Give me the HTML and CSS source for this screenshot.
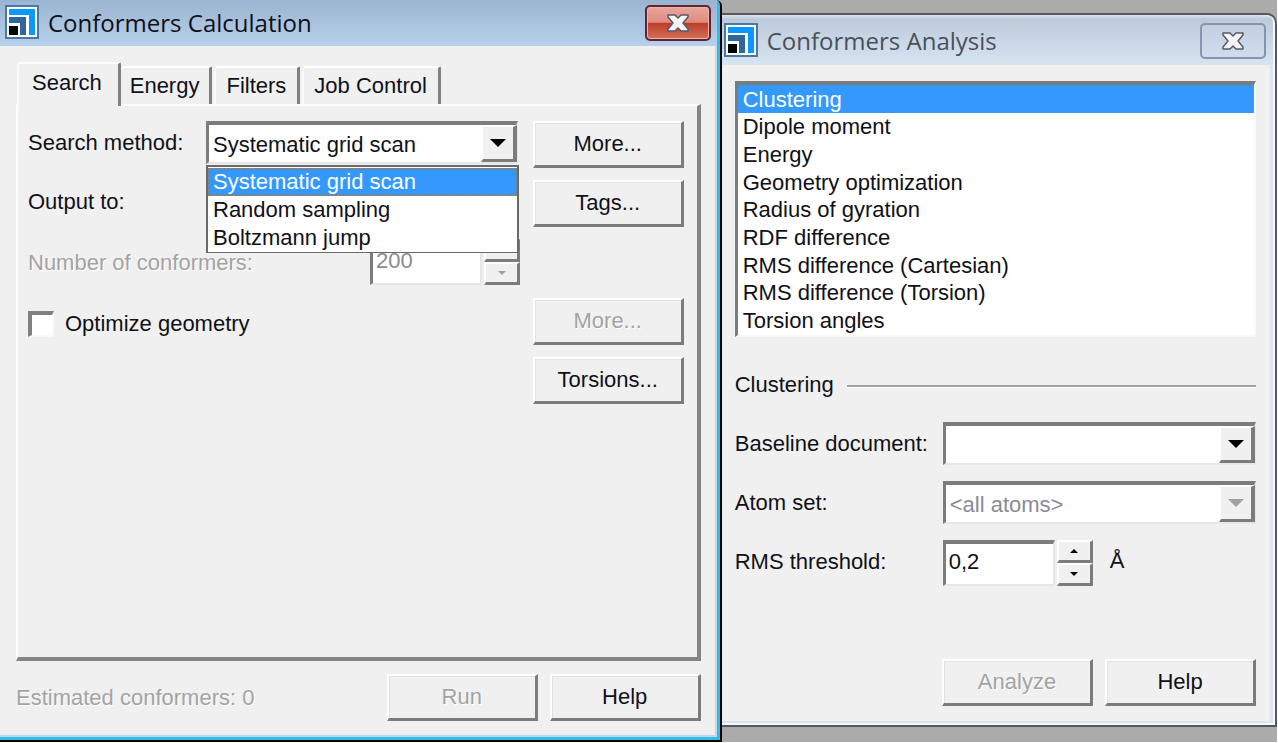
FILE: index.html
```html
<!DOCTYPE html>
<html lang="en">
<head>
<meta charset="utf-8">
<title>Conformers</title>
<link rel="stylesheet" href="styles.css">
</head>
<body>
<main class="desktop">
  <section class="window window-active" aria-labelledby="calc-title">
    <header class="titlebar">
      <svg class="app-icon" viewBox="0 0 34 34" aria-hidden="true">
        <rect width="34" height="34" fill="#4a79a8"/>
        <rect x="2" y="2" width="30" height="30" fill="#fff"/>
        <path d="M4 4h26v26h-6V10H4z" fill="#0a98ff"/>
        <path d="M4 12h17v18h-6V18H4z" fill="#2f679c"/>
        <rect x="4" y="21" width="9" height="9" fill="#000"/>
      </svg>
      <h1 class="title" id="calc-title">Conformers Calculation</h1>
      <button class="close close-red" type="button" aria-label="Close">
        <svg viewBox="0 0 22 18" aria-hidden="true"><path d="M1 1h7l3 3 3-3h7v2l-5 6 5 6v2h-7l-3-3-3 3H1v-2l5-6-5-6z" fill="#f4f4f4" stroke="#565a68" stroke-width="1.500" stroke-linejoin="round"/></svg>
      </button>
    </header>
    <div class="client">
      <div class="tabs" role="tablist">
        <button class="tab tab-active" type="button" role="tab" aria-selected="true">Search</button>
        <button class="tab tab-energy" type="button" role="tab" aria-selected="false">Energy</button>
        <button class="tab" type="button" role="tab" aria-selected="false">Filters</button>
        <button class="tab" type="button" role="tab" aria-selected="false">Job Control</button>
      </div>
      <div class="panel" role="tabpanel">
        <div class="row">
          <label class="label" for="method">Search method:</label>
          <div class="combo">
            <select class="field" id="method">
              <option>Systematic grid scan</option>
              <option>Random sampling</option>
              <option>Boltzmann jump</option>
            </select>
            <span class="drop" aria-hidden="true"><svg viewBox="0 0 16 8"><path d="M0 0h16L8 8z"/></svg></span>
            <ul class="menu">
              <li class="menu-item menu-selected">Systematic grid scan</li>
              <li class="menu-item">Random sampling</li>
              <li class="menu-item">Boltzmann jump</li>
            </ul>
          </div>
          <button class="button" type="button">More...</button>
        </div>
        <div class="row">
          <span class="label">Output to:</span>
          <button class="button" type="button">Tags...</button>
        </div>
        <div class="row">
          <label class="label label-wide disabled" for="count">Number of conformers:</label>
          <div class="spin">
            <input class="field number" id="count" type="text" value="200" disabled>
            <span class="steps">
              <button class="step" type="button" aria-label="Increase" disabled><svg viewBox="0 0 8 4"><path d="M0 4h8L4 0z"/></svg></button>
              <button class="step" type="button" aria-label="Decrease" disabled><svg viewBox="0 0 8 4"><path d="M0 0h8L4 4z"/></svg></button>
            </span>
          </div>
        </div>
        <div class="row">
          <label class="check"><input class="box" type="checkbox">Optimize geometry</label>
          <button class="button" type="button" disabled>More...</button>
        </div>
        <div class="row">
          <button class="button" type="button">Torsions...</button>
        </div>
      </div>
      <footer class="footer">
        <span class="status disabled">Estimated conformers: 0</span>
        <button class="button" type="button" disabled>Run</button>
        <button class="button" type="button">Help</button>
      </footer>
    </div>
  </section>

  <section class="window window-back" aria-labelledby="analysis-title">
    <header class="titlebar">
      <svg class="app-icon" viewBox="0 0 34 34" aria-hidden="true">
        <rect width="34" height="34" fill="#4a79a8"/>
        <rect x="2" y="2" width="30" height="30" fill="#fff"/>
        <path d="M4 4h26v26h-6V10H4z" fill="#0a98ff"/>
        <path d="M4 12h17v18h-6V18H4z" fill="#2f679c"/>
        <rect x="4" y="21" width="9" height="9" fill="#000"/>
      </svg>
      <h1 class="title" id="analysis-title">Conformers Analysis</h1>
      <button class="close" type="button" aria-label="Close">
        <svg viewBox="0 0 22 18" aria-hidden="true"><path d="M1 1h7l3 3 3-3h7v2l-5 6 5 6v2h-7l-3-3-3 3H1v-2l5-6-5-6z" fill="#f4f4f4" stroke="#565a68" stroke-width="1.500" stroke-linejoin="round"/></svg>
      </button>
    </header>
    <div class="client">
      <ul class="listbox" role="listbox" aria-label="Analysis">
        <li class="option option-selected" role="option" aria-selected="true">Clustering</li>
        <li class="option" role="option">Dipole moment</li>
        <li class="option" role="option">Energy</li>
        <li class="option" role="option">Geometry optimization</li>
        <li class="option" role="option">Radius of gyration</li>
        <li class="option" role="option">RDF difference</li>
        <li class="option" role="option">RMS difference (Cartesian)</li>
        <li class="option" role="option">RMS difference (Torsion)</li>
        <li class="option" role="option">Torsion angles</li>
      </ul>
      <h2 class="group">Clustering</h2>
      <div class="form">
        <div class="row">
          <label class="label" for="baseline">Baseline document:</label>
          <div class="combo">
            <select class="field" id="baseline"><option></option></select>
            <span class="drop" aria-hidden="true"><svg viewBox="0 0 16 8"><path d="M0 0h16L8 8z"/></svg></span>
          </div>
        </div>
        <div class="row">
          <label class="label" for="atoms">Atom set:</label>
          <div class="combo">
            <select class="field" id="atoms" disabled><option>&lt;all atoms&gt;</option></select>
            <span class="drop drop-off" aria-hidden="true"><svg viewBox="0 0 16 8"><path d="M0 0h16L8 8z"/></svg></span>
          </div>
        </div>
        <div class="row">
          <label class="label" for="rms">RMS threshold:</label>
          <div class="spin">
            <input class="field number" id="rms" type="text" value="0,2">
            <span class="steps">
              <button class="step" type="button" aria-label="Increase"><svg viewBox="0 0 8 4"><path d="M0 4h8L4 0z"/></svg></button>
              <button class="step" type="button" aria-label="Decrease"><svg viewBox="0 0 8 4"><path d="M0 0h8L4 4z"/></svg></button>
            </span>
            <span class="unit">Å</span>
          </div>
        </div>
      </div>
      <footer class="footer">
        <button class="button" type="button" disabled>Analyze</button>
        <button class="button" type="button">Help</button>
      </footer>
    </div>
  </section>
</main>
</body>
</html>
```
FILE: styles.css
```css
* { box-sizing: border-box; }
body {
  margin: 0;
  background: #fff;
  color: #101018;
  font: 22px/28px "Liberation Sans", Arial, sans-serif;
}
button, input, select { font: inherit; color: inherit; margin: 0; }
ul { list-style: none; margin: 0; padding: 0; }

.desktop {
  display: flex;
  min-height: 100vh;
  background: #ababab;
  border: solid #fff;
  border-width: 0 1px 1px 0;
}

/* Windows */
.window { display: flex; flex-direction: column; min-width: 0; background: #f0f0f0; }
.window-active {
  flex: 722 1 0;
  border: solid #000;
  border-width: 0 2px 2px 0;
  border-top-right-radius: 6px;
  box-shadow: inset -3px -3px #2cc0e4, inset -5px -5px #c4d6ec;
}
.window-back {
  flex: 555 1 0;
  margin: 13px 0 15px;
  border: solid #55585c;
  border-width: 2px 2px 2px 0;
  border-radius: 0 10px 0 0;
  box-shadow: inset -2px -2px #f4f8fc, inset -5px -4px #dae5f0;
}
.titlebar { display: flex; align-items: flex-start; padding: 5px 6px 0 5px; }
.window-active .titlebar {
  height: 46px;
  margin-right: 3px;
  background: linear-gradient(#9ab3d0, #b7d0eb);
}
.window-back .titlebar {
  height: 50px;
  padding: 8px 7px 0 2px;
  margin-right: 2px;
  border-top-right-radius: 8px;
  background: linear-gradient(#dfe5ee, #bccada 4px, #d7e4f2);
}
.app-icon { width: 34px; height: 34px; flex: none; }
.title {
  flex: 1;
  margin: 0 0 0 9px;
  font: 24px/36px "Open Sans", "Noto Sans", sans-serif;
}
.window-back .title { color: #4b5058; }
.close {
  display: grid;
  place-items: center;
  width: 66px;
  height: 36px;
  padding: 0;
  border: 2px solid #8694b0;
  border-radius: 5px;
  background: linear-gradient(#c3d0df, #cfdceb);
}
.close svg { width: 22px; height: 18px; }
.close-red {
  border-color: #5c2530;
  background: linear-gradient(#e9a69c, #dd8a7e 48%, #bb3d26 50%, #d5705a);
  box-shadow: inset 0 0 0 1px #eeb5ab;
}

.client { flex: 1; display: flex; flex-direction: column; }
.window-active .client { padding: 16px 19px 19px 16px; }
.window-back .client { padding: 16px 19px 19px 13px; }

/* Tabs */
.tabs { display: flex; align-items: flex-end; padding-left: 1px; }
.tab {
  height: 38px;
  padding: 0 11px 0 10px;
  margin-left: 2px;
  border: solid;
  border-width: 2px 3px 0 2px;
  border-color: #fff #808080 #fff #fafafa;
  border-radius: 4px 2px 0 0;
  background: #f0f0f0;
}
.tab-active {
  position: relative;
  height: 44px;
  padding: 0 16px 4px 13px;
  margin: 0 0 -2px;
}
.tab-energy { padding: 0 10px 0 9px; margin-left: 0; border-left-width: 0; }
.panel {
  flex: 1;
  display: flex;
  flex-direction: column;
  gap: 12px;
  padding: 15px 13px 0 10px;
  border: solid;
  border-width: 2px 4px 4px 2px;
  border-color: #fff #848484 #848484 #fff;
}

/* Form rows */
.row { display: flex; align-items: flex-start; height: 47px; }
.row > .button { margin-left: auto; }
.label { flex: none; padding-top: 8px; }
.panel .label { width: 178px; }
.panel .label-wide { width: 342px; padding-top: 10px; }
.form .label { width: 208px; }
.form { display: flex; flex-direction: column; gap: 12px; }
.disabled { color: #a3a3a3; text-shadow: 1px 1px #fff; }

.field {
  width: 100%;
  height: 43px;
  padding: 2px 4px 0;
  border: solid;
  border-width: 4px 2px 2px 3px;
  border-color: #7c7c7c #e6e6e6 #e6e6e6 #7c7c7c;
  border-radius: 0;
  background: #fff;
  appearance: none;
  outline: 0;
}
.field:disabled { color: #8b8b93; opacity: 1; }
.combo { position: relative; flex: none; width: 312px; }
.form .combo { flex: 1; }
.drop {
  position: absolute;
  top: 4px;
  right: 1px;
  display: grid;
  place-items: center;
  width: 36px;
  height: 37px;
  border: solid;
  border-width: 2px 4px 3px 2px;
  border-color: #fff #7c7c7c #7c7c7c #fff;
  background: #f0f0f0;
  pointer-events: none;
}
.drop svg { width: 16px; height: 8px; }
.drop-off svg { fill: #a0a0a0; }
.menu {
  position: absolute;
  z-index: 1;
  top: 44px;
  left: 0;
  right: -1px;
  padding-top: 1px;
  border: 2px solid #6a6a6a;
  border-bottom-width: 1px;
  background: #fff;
}
.menu-item { padding-left: 5px; }
.menu-selected { color: #fff; background: #3399ff; outline: 2px dotted #b0763c; outline-offset: -2px; }

.spin { display: flex; align-items: flex-start; }
.number { width: 112px; height: 46px; padding: 0 3px 4px; }
.steps { display: flex; flex-direction: column; margin-left: 2px; }
.step {
  display: grid;
  place-items: center;
  width: 36px;
  height: 23px;
  padding: 0;
  border: solid;
  border-width: 2px 3px 3px 2px;
  border-color: #fff #7c7c7c #7c7c7c #fff;
  background: #f0f0f0;
}
.step svg { width: 8px; height: 4px; }
.step:disabled svg { fill: #a0a0a0; }
.unit { padding: 7px 0 0 17px; }

.check { display: flex; align-items: center; gap: 11px; padding-top: 12px; }
.box {
  appearance: none;
  width: 26px;
  height: 26px;
  border: solid;
  border-width: 4px 2px 2px 4px;
  border-color: #808080 #fafafa #fafafa #808080;
  background: #fff;
}

.button {
  flex: none;
  width: 151px;
  height: 47px;
  padding: 0;
  border: solid;
  border-width: 2px 3px 3px 2px;
  border-color: #fff #7c7c7c #7c7c7c #fff;
  background: #f0f0f0;
  box-shadow: inset 1px 1px #e2e2e2;
}
.button:disabled { color: #a3a3a3; text-shadow: 1px 1px #fff; }
.footer { display: flex; justify-content: flex-end; gap: 12px; margin-top: auto; }
.window-active .footer { padding-top: 13px; }
.status { margin-right: auto; padding-top: 10px; }

/* Analysis list */
.listbox {
  display: flex;
  flex-direction: column;
  height: 256px;
  padding-bottom: 1px;
  border: solid;
  border-width: 4px 2px 2px 3px;
  border-color: #7c7c7c #fafafa #fafafa #7c7c7c;
  background: #fff;
  line-height: 27px;
}
.option { flex: 1; display: flex; align-items: flex-end; padding-left: 5px; white-space: nowrap; }
.option-selected { color: #fff; background: #3399ff; }
.group {
  display: flex;
  align-items: center;
  gap: 13px;
  margin: 34px 0 23px;
  font: inherit;
}
.group::after { content: ""; flex: 1; margin-top: 2px; height: 3px; box-sizing: border-box; border-top: 2px solid #a0a0a0; border-bottom: 1px solid #fff; }
```
